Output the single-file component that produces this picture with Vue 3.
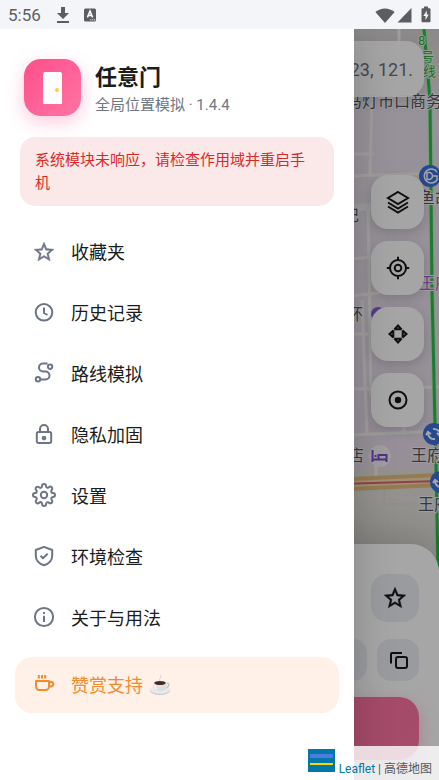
<template>
  <div class="app">
    <header class="status-bar">
      <span class="clock">5:56</span>
      <svg class="status-icon" width="14" height="18" viewBox="0 0 14 18">
        <path d="M5 1h4v6h4l-6 6-6-6h4zM1 15h12v2H1z" fill="#5c5d60"/>
      </svg>
      <svg class="status-icon app-badge" width="12" height="14" viewBox="0 0 12 14">
        <rect x="0" y="0.5" width="12" height="13" rx="1.5" fill="#5c5d60"/>
        <path d="M3.4 9.4 6 3l2.6 6.4M4.3 7.4h3.4" fill="none" stroke="#fff" stroke-width="1.5"/>
        <path d="M6.4 11.8h1M8.2 11.8h1M10 11.8h1" stroke="#fff" stroke-width="1"/>
      </svg>
      <div class="status-right">
        <svg width="20" height="16" viewBox="0 0 20 16">
          <path d="M0.4 5C6 .2 14 .2 19.600 5L10 16z" fill="#5c5d60"/>
        </svg>
        <svg width="15" height="16" viewBox="0 0 15 16">
          <path d="M14.500 1v14.500H.5z" fill="#5c5d60"/>
        </svg>
        <svg class="battery" width="10" height="17" viewBox="0 0 10 17">
          <path d="M3 .5h4v1.700h1.500a1 1 0 0 1 1 1v12a1 1 0 0 1-1 1h-7a1 1 0 0 1-1-1v-12a1 1 0 0 1 1-1H3z" fill="#5c5d60"/>
          <path d="M5.800 4.500 2.300 10h2.200v4L7.800 8.500H5.800z" fill="#f3f5f9"/>
        </svg>
      </div>
    </header>

    <main class="stage">
      <svg class="map" viewBox="0 29 439 751" preserveAspectRatio="xMaxYMin slice">
        <defs>
          <linearGradient id="land" x1="0" y1="0" x2="0" y2="1">
            <stop offset="0" stop-color="#d6d3d2"/>
            <stop offset="0.1" stop-color="#e8e0ea"/>
            <stop offset="0.58" stop-color="#e6dcea"/>
          </linearGradient>
        </defs>
        <rect x="0" y="29" width="439" height="751" fill="url(#land)"/>
        <path d="M0 476 439 469V780H0z" fill="#e2e0da"/>
        <g fill="none" stroke="#f5f3f2" stroke-width="3">
          <path d="M399 29v20M372 98l-2 77M350 154h24M350 176l90-3M350 210l24-2 66-6M368 205l3 190 M350 259l22-2M350 296l30-3 M350 334h28M350 389l90-2M362 300l5 135M350 435l89-4M404 427v8M376 464v12"/>
          <path d="M384 490v14h32" stroke-width="1" stroke="#d4d6d8"/>
        </g>
        <path d="M340 208l32-2 68-6" stroke="#f1eff0" stroke-width="6" fill="none"/>
        <path d="M340 484.500 439 480" stroke="#e3bd80" stroke-width="14"/>
        <path d="M340 484.500 439 480" stroke="#f7dfb0" stroke-width="6"/>
        <path d="M340 484 439 481" stroke="#dc6478" stroke-width="2"/>
        <path d="M424 29 430 100 432 290 435 425 436 463 438 570" fill="none" stroke="#b8ecc0" stroke-width="5"/>
        <path d="M424 29 430 100 432 290 435 425 436 463 438 570" fill="none" stroke="#2cbf48" stroke-width="3"/>
        <g class="metro-label">
          <text x="418" y="45">8</text>
          <text x="421" y="61">号</text>
          <text x="423" y="76">线</text>
        </g>
        <g class="map-label">
          <text x="442" y="107" text-anchor="end">马灯市口商务</text>
          <text x="419" y="203">鱼胡</text>
          <text x="343" y="221">记</text>
          <text x="347" y="320">环</text>
          <text x="348" y="461">店</text>
          <text x="411" y="461">王府</text>
          <text x="418" y="510">王府</text>
        </g>
        <text class="mall-label" x="419" y="289">王府</text>
        <circle cx="378" cy="314" r="7" fill="#8a5bd8"/>
        <circle cx="380" cy="456" r="11" fill="#f4f1f6"/>
        <path d="M372.500 450v12M372.500 459.500h14M386.500 462v-7h-8v4M374.500 456h2" stroke="#7a4fcb" stroke-width="2" fill="none"/>
        <g fill="#3a70dd">
          <circle cx="430" cy="176" r="11"/>
          <circle cx="434" cy="434" r="11"/>
          <circle cx="441" cy="482" r="11"/>
        </g>
        <g fill="none" stroke="#fff" stroke-width="1.500">
          <path d="M437 172a7 7 0 1 0 0 8v-4h-4M427 172.500v7h2a3.500 3.500 0 0 0 0-7z"/>
          <path d="M428 433a6 6 0 0 0 7 6M440 435a6 6 0 0 0-7-6M426 435l2-3 3 2M437 433l3 3 2-3" stroke-width="2"/>
          <path d="M435 481a6 6 0 0 0 7 6M433 483l2-3 3 2" stroke-width="2"/>
        </g>
      </svg>

      <div class="controls">
        <div class="search">
          <input v-model="coords" type="text" aria-label="坐标"/>
        </div>
        <div class="fabs">
          <button v-for="fab in fabs" :key="fab.label" class="fab" type="button" :aria-label="fab.label">
            <svg width="24" height="24" viewBox="0 0 24 24" class="line-icon">
              <path v-if="fab.line" :d="fab.line"/>
              <path v-if="fab.solid" :d="fab.solid" class="solid" fill-rule="evenodd"/>
            </svg>
          </button>
        </div>
        <section class="sheet">
          <div class="sheet-row">
            <button class="tile large" type="button" aria-label="收藏">
              <svg width="26" height="26" viewBox="0 0 24 24">
                <path :d="starPath" fill="#17181c" stroke="#17181c" stroke-width="0.4"/>
              </svg>
            </button>
          </div>
          <div class="sheet-row second">
            <div class="field"></div>
            <button class="tile" type="button" aria-label="复制">
              <svg width="24" height="24" viewBox="0 0 24 24" class="line-icon">
                <path d="M5 15.500V6a1 1 0 0 1 1-1h10"/>
                <rect x="10" y="9" width="11" height="11" rx="2"/>
              </svg>
            </button>
          </div>
          <button class="primary" type="button" aria-label="开始模拟"></button>
        </section>
      </div>

      <div class="scrim"></div>

      <aside class="drawer">
        <div class="brand">
          <div class="logo">
            <svg width="20" height="32" viewBox="0 0 20 32">
              <path d="M0 32V2a2 2 0 0 1 2-2h15a2 2 0 0 1 2 2v30z" fill="#fff"/>
              <circle cx="14" cy="18" r="2" fill="#ffc940"/>
            </svg>
          </div>
          <div>
            <h1>任意门</h1>
            <p class="version">全局位置模拟 · 1.4.4</p>
          </div>
        </div>

        <p class="alert">系统模块未响应，请检查作用域并重启手机</p>

        <nav class="menu">
          <a
              v-for="item in menu"
              :key="item.label"
              href="#"
              class="menu-item"
              :class="{ 'sponsor': item.sponsor }"
              @click.prevent
          >
            <svg width="24" height="24" viewBox="0 0 24 24" class="menu-icon">
              <path v-if="item.solid" :d="item.solid" class="solid"/>
              <path v-if="item.line" :d="item.line"/>
            </svg>
            <span>{{ item.label }}</span>
            <svg v-if="item.sponsor" class="coffee" width="22" height="22" viewBox="0 0 22 22">
              <ellipse cx="11" cy="16.500" rx="10" ry="4.500" fill="#c9cbce"/>
              <ellipse cx="11" cy="15.500" rx="10" ry="4.200" fill="#e9eaec"/>
              <path d="M17 9.500c3.500-1.500 4.500 3-1.500 5" fill="none" stroke="#c4c6ca" stroke-width="1.500"/>
              <path d="M4 9c0 5 2.500 8.500 7 8.500s7-3.500 7-8.500z" fill="#dddfe2"/>
              <path d="M5 10c.5 4 2 6 4 7-1.500-2-2-4-2-6z" fill="#fafafa"/>
              <ellipse cx="11" cy="8.800" rx="7" ry="2.800" fill="#f4f4f5"/>
              <ellipse cx="11" cy="9" rx="5.800" ry="2" fill="#4a2a1f"/>
              <path d="M11 7c-2-2 2-3 .5-6" fill="none" stroke="#d3d3d3" stroke-width="1"/>
            </svg>
          </a>
        </nav>
      </aside>

      <footer class="attribution">
        <svg width="27" height="23" viewBox="0 0 27 23">
          <path d="M0 0h27v23H0z" fill="#0078a8"/>
          <path d="M2 5h23v4H2z" fill="#4c7be1"/>
          <path d="M2 9h23v5H2z" fill="#0078a8"/>
          <path d="M2 14h23v2H2z" fill="#ffd500"/>
        </svg>
        <span><a href="#" @click.prevent>Leaflet</a> | 高德地图</span>
      </footer>
    </main>
  </div>
</template>

<script setup>
import {ref} from 'vue'

const coords = ref('23, 121.')

const starPath = 'M22 9.24l-7.19-.62L12 2 9.19 8.63 2 9.24l5.46 4.73L5.82 21 12 17.27 18.18 21l-1.63-7.03L22 9.24zM12 15.4l-3.76 2.27 1-4.28-3.32-2.88 4.38-.38L12 6.1l1.71 4.04 4.38.38-3.32 2.88 1 4.28L12 15.4z'

const fabs = [
  {
    label: '图层',
    line: 'M12 2 22 8 12 14 2 8zM2 12.500 12 18.500 22 12.500M2 16.500 12 22.500 22 16.500'
  },
  {
    label: '定位',
    line: 'M20 12a8 8 0 1 1-16 0 8 8 0 0 1 16 0zM15.300 12a3.300 3.300 0 1 1-6.600 0 3.300 3.300 0 0 1 6.600 0zM12 .8V4M12 20v3.200M.8 12H4M20 12h3.200'
  },
  {
    label: '移动',
    solid: 'M12 2 17 7.500v.8H7v-.8zM12 5.200l-1 1.100h2zM12 22 17 16.500v-.8H7v.8zM12 18.800l-1-1.100h2zM2 12 7.500 7h.8v10h-.8zM5.200 12l1.100-1v2zM22 12 16.500 7h-.8v10h.8zM18.800 12l-1.100-1v2z'
  },
  {
    label: '当前位置',
    line: 'M20.500 12a8.500 8.500 0 1 1-17 0 8.500 8.500 0 0 1 17 0z',
    solid: 'M15.200 12a3.200 3.200 0 1 1-6.400 0 3.200 3.200 0 0 1 6.400 0z'
  }
]

const menu = [
  {label: '收藏夹', solid: starPath},
  {label: '历史记录', line: 'M20.300 11.300a8.300 8.300 0 1 1-16.600 0 8.300 8.300 0 0 1 16.600 0zM12 6.500v5.500l3.500 2'},
  {
    label: '路线模拟',
    line: 'M15.500 1.500H11a4 4 0 0 0 0 8h2.500a4 4 0 0 1 0 8H8.300M20.300 4.700a2.200 2.200 0 1 1-4.400 0 2.200 2.200 0 0 1 4.400 0zM8.200 17.300a2.200 2.200 0 1 1-4.400 0 2.200 2.200 0 0 1 4.400 0z'
  },
  {
    label: '隐私加固',
    line: 'M6.500 9h11a1.700 1.700 0 0 1 1.700 1.700v7.600a1.700 1.700 0 0 1-1.700 1.700h-11a1.700 1.700 0 0 1-1.700-1.700v-7.600A1.700 1.700 0 0 1 6.500 9zM8 9V6a4 4 0 0 1 8 0v3M13.300 15a1.300 1.300 0 1 1-2.600 0 1.300 1.300 0 0 1 2.600 0z'
  },
  {
    label: '设置',
    line: 'M15.200 11a3.200 3.200 0 1 1-6.400 0 3.200 3.200 0 0 1 6.400 0zM19.400 14a1.650 1.650 0 0 0 .33 1.820l.06.06a2 2 0 1 1-2.830 2.830l-.06-.06a1.650 1.650 0 0 0-2.800 1.180V20a2 2 0 0 1-4 0v-.09a1.650 1.650 0 0 0-2.890-1.180l-.06.06a2 2 0 1 1-2.830-2.830l.06-.06a1.650 1.650 0 0 0-1.180-2.800H3a2 2 0 0 1 0-4h.09a1.650 1.650 0 0 0 1.180-2.890l-.06-.06a2 2 0 1 1 2.830-2.830l.06.06a1.650 1.650 0 0 0 1.820.33H9a1.650 1.650 0 0 0 1-1.510V2a2 2 0 0 1 4 0v.09a1.650 1.650 0 0 0 2.800 1.180l.06-.06a2 2 0 1 1 2.830 2.830l-.06.06a1.650 1.650 0 0 0-.33 1.820V8a1.650 1.650 0 0 0 1.510 1H21a2 2 0 0 1 0 4h-.09a1.650 1.650 0 0 0-1.510 1z'
  },
  {
    label: '环境检查',
    line: 'M12 1.900 20.200 5v5.500c0 5-3 8.200-8.200 9.700-5.200-1.500-8.200-4.700-8.200-9.700V5zM8.500 10.800l2.500 2.500 4.700-4.700'
  },
  {
    label: '关于与用法',
    line: 'M21.100 11a9.100 9.100 0 1 1-18.200 0 9.100 9.100 0 0 1 18.200 0zM12 9.700v6.300M12 6v2'
  },
  {
    label: '赞赏支持',
    line: 'M4 8h13v5.500a3.500 3.500 0 0 1-3.500 3.500h-6A3.500 3.500 0 0 1 4 13.500zM17 9h2.500a1.800 1.800 0 0 1 1.800 1.800v.4a2.300 2.300 0 0 1-2.300 2.300h-2M6.800 2v3.500M10 2v3.500M13.200 2v3.500',
    sponsor: true
  }
]
</script>

<style>
body {
  margin: 0;
}
</style>

<style scoped>
.app {
  min-height: 100vh;
  display: flex;
  flex-direction: column;
  font-family: Roboto, "Noto Sans CJK SC", sans-serif;
  color: #1b1c20;
}

button {
  border: none;
  padding: 0;
  cursor: pointer;
}

.status-bar {
  display: flex;
  align-items: center;
  height: 29px;
  padding: 0 8px;
  background: #f3f5f9;
  color: #5c5d60;
}

.clock {
  font-size: 17px;
  margin-right: 15px;
}

.app-badge {
  margin-left: 14px;
}

.status-right {
  display: flex;
  align-items: center;
  gap: 2px;
  margin-left: auto;
}

.battery {
  margin-left: 7px;
}

.stage {
  flex: 1;
  display: grid;
  grid-template-columns: minmax(0, 1fr);
  overflow: hidden;
}

.stage > * {
  grid-area: 1 / 1;
}

.map {
  display: block;
  width: 100%;
  height: 100%;
}

.map-label,
.mall-label {
  font-size: 16px;
  fill: #55575f;
  stroke: #f4f2f5;
  stroke-width: 2px;
  paint-order: stroke;
}

.mall-label {
  fill: #a765d0;
}

.metro-label {
  font-size: 13px;
  fill: #2cb046;
  stroke: #e6f5e6;
  stroke-width: 2px;
  paint-order: stroke;
}

.controls {
  display: flex;
  flex-direction: column;
  padding-top: 12px;
  z-index: 1;
}

.search {
  display: flex;
  height: 56px;
  margin: 0 15px;
  border-radius: 18px;
  background: rgba(255, 255, 255, 0.96);
  box-shadow: 0 4px 14px rgba(0, 0, 0, 0.12);
}

.search input {
  flex: 1;
  min-width: 0;
  padding: 0 11px;
  border: none;
  background: none;
  font: inherit;
  font-size: 18px;
  color: #6b7180;
  text-align: right;
}

.fabs {
  display: flex;
  flex-direction: column;
  align-items: flex-end;
  gap: 12px;
  margin: 78px 15px 0;
}

.fab {
  display: grid;
  place-items: center;
  width: 53px;
  height: 54px;
  border-radius: 17px;
  background: #fdfdfd;
  box-shadow: 0 4px 12px rgba(0, 0, 0, 0.16);
}

.line-icon {
  fill: none;
  stroke: #17181c;
  stroke-width: 2;
}

.solid {
  fill: #17181c;
  stroke: none;
}

.sheet {
  margin-top: auto;
  padding: 30px 20px 20px;
  border-radius: 28px 28px 0 0;
  background: #fff;
  box-shadow: 0 -6px 40px rgba(0, 0, 0, 0.2);
}

.sheet-row {
  display: flex;
  justify-content: flex-end;
  gap: 10px;
}

.second {
  margin: 17px 0 16px;
}

.field {
  flex: 1;
  border-radius: 14px;
  background: #eceff3;
}

.tile {
  display: grid;
  place-items: center;
  width: 42px;
  height: 42px;
  border-radius: 14px;
  background: #eceff3;
}

.large {
  width: 48px;
  height: 48px;
  border-radius: 16px;
}

.primary {
  display: block;
  width: 100%;
  height: 63px;
  border-radius: 20px;
  background: linear-gradient(135deg, #fb6e9c, #ff74a4);
  box-shadow: 0 6px 20px rgba(255, 80, 140, 0.3);
}

.scrim {
  background: rgba(0, 0, 0, 0.35);
  z-index: 2;
}

.drawer {
  z-index: 3;
  width: calc(100% - 85px);
  box-sizing: border-box;
  padding: 29px 15px 40px;
  background: #fff;
  box-shadow: 0 0 40px rgba(0, 0, 0, 0.2);
}

.brand {
  display: flex;
  align-items: center;
  gap: 14px;
  padding: 0 9px;
}

.logo {
  display: grid;
  place-items: center;
  width: 57px;
  height: 57px;
  border-radius: 17px;
  background: linear-gradient(135deg, #ff4f8b, #ff74a4);
  box-shadow: 0 6px 18px rgba(255, 79, 139, 0.3);
}

h1 {
  margin: 4px 0 0;
  font-size: 22px;
  line-height: 32px;
  font-weight: 700;
}

.version {
  margin: 0;
  font-size: 15px;
  line-height: 23px;
  color: #6f7786;
}

.alert {
  margin: 20px 5px 18px;
  padding: 12px 15px 11px;
  border-radius: 15px;
  background: #fbe8e8;
  color: #dc2828;
  font-size: 15px;
  line-height: 23px;
}

.menu {
  display: flex;
  flex-direction: column;
  gap: 5px;
}

.menu-item {
  display: flex;
  align-items: center;
  height: 56px;
  padding: 0 17px;
  border-radius: 17px;
  font-size: 18px;
  line-height: 25px;
  color: #1b1c20;
  text-decoration: none;
}

.menu-icon {
  margin-right: 15px;
  fill: none;
  stroke: #6d7686;
  stroke-width: 2;
  stroke-linejoin: round;
  overflow: visible;
}

.menu-icon .solid {
  fill: #6d7686;
  stroke-width: 0.4;
  stroke: #6d7686;
}

.sponsor {
  margin-top: 6px;
  background: #fff1e7;
  color: #f58a2c;
}

.sponsor .menu-icon {
  stroke: #f58a2c;
}

.coffee {
  margin-left: 6px;
}

.attribution {
  z-index: 4;
  align-self: end;
  justify-self: end;
  display: flex;
  align-items: flex-end;
  gap: 4px;
  padding: 3px 7px 2px 5px;
  background: rgba(255, 255, 255, 0.8);
  color: #55565a;
  font-size: 12px;
  line-height: 17px;
}

.attribution svg {
  margin-bottom: 6px;
}

.attribution a {
  color: #0078a8;
  text-decoration: none;
}
</style>
